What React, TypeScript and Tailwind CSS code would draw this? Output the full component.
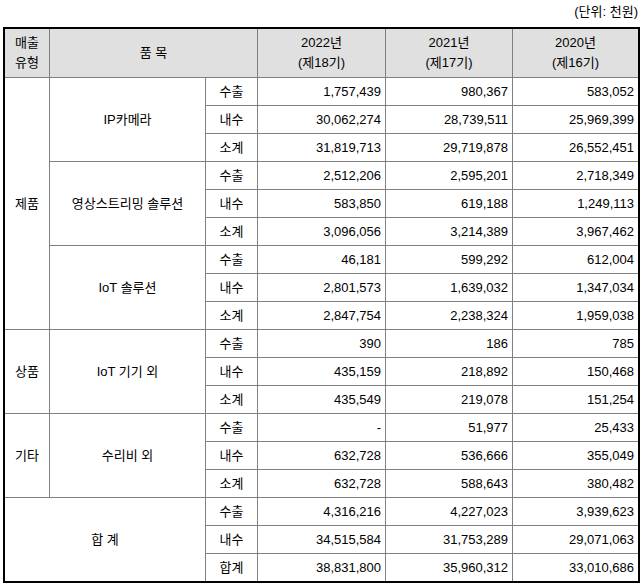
import React from "react";

type Row = { kind: string; v: [string, string, string] };
type Group = { type?: string; typeSpan?: number; name: string; rows: Row[]; total?: boolean };

const groups: Group[] = [
  {
    type: "제품",
    typeSpan: 9,
    name: "IP카메라",
    rows: [
      { kind: "수출", v: ["1,757,439", "980,367", "583,052"] },
      { kind: "내수", v: ["30,062,274", "28,739,511", "25,969,399"] },
      { kind: "소계", v: ["31,819,713", "29,719,878", "26,552,451"] },
    ],
  },
  {
    name: "영상스트리밍 솔루션",
    rows: [
      { kind: "수출", v: ["2,512,206", "2,595,201", "2,718,349"] },
      { kind: "내수", v: ["583,850", "619,188", "1,249,113"] },
      { kind: "소계", v: ["3,096,056", "3,214,389", "3,967,462"] },
    ],
  },
  {
    name: "IoT 솔루션",
    rows: [
      { kind: "수출", v: ["46,181", "599,292", "612,004"] },
      { kind: "내수", v: ["2,801,573", "1,639,032", "1,347,034"] },
      { kind: "소계", v: ["2,847,754", "2,238,324", "1,959,038"] },
    ],
  },
  {
    type: "상품",
    typeSpan: 3,
    name: "IoT 기기 외",
    rows: [
      { kind: "수출", v: ["390", "186", "785"] },
      { kind: "내수", v: ["435,159", "218,892", "150,468"] },
      { kind: "소계", v: ["435,549", "219,078", "151,254"] },
    ],
  },
  {
    type: "기타",
    typeSpan: 3,
    name: "수리비 외",
    rows: [
      { kind: "수출", v: ["-", "51,977", "25,433"] },
      { kind: "내수", v: ["632,728", "536,666", "355,049"] },
      { kind: "소계", v: ["632,728", "588,643", "380,482"] },
    ],
  },
  {
    name: "합 계",
    total: true,
    rows: [
      { kind: "수출", v: ["4,316,216", "4,227,023", "3,939,623"] },
      { kind: "내수", v: ["34,515,584", "31,753,289", "29,071,063"] },
      { kind: "합계", v: ["38,831,800", "35,960,312", "33,010,686"] },
    ],
  },
];

const cell = "bg-white flex items-center justify-center text-[13px] text-black";
const head = "bg-[#e0e0e0] flex flex-col items-center justify-center text-[13px] leading-[20px] text-black";
const num = "bg-white flex items-center justify-end pr-[4px] text-[13px] text-black";

export default function App() {
  return (
    <div
      className="w-[643px] h-[585px] bg-white"
      style={{ fontFamily: '"Liberation Sans", "Noto Sans CJK KR", sans-serif' }}
    >
      <div className="ml-[3px] w-[637px]">
        <div className="h-[27px] flex items-start justify-end pr-[2px] pt-[3px] text-[13px] leading-[18px] text-black">
          (단위: 천원)
        </div>
        <div className="border-2 border-black bg-[#808080] grid grid-cols-[44px_155px_51px_127px_126px_125px] grid-rows-[48px_repeat(18,27px)] gap-px">
          <div className={head}>
            <span>매출</span>
            <span>유형</span>
          </div>
          <div className={`${head} col-span-2`}>품 목</div>
          <div className={head}>
            <span>2022년</span>
            <span>(제18기)</span>
          </div>
          <div className={head}>
            <span>2021년</span>
            <span>(제17기)</span>
          </div>
          <div className={head}>
            <span>2020년</span>
            <span>(제16기)</span>
          </div>
          {groups.map((g, gi) => (
            <React.Fragment key={gi}>
              {g.type && (
                <div className={`${cell} ${g.typeSpan === 9 ? "row-span-9" : "row-span-3"}`}>{g.type}</div>
              )}
              <div className={`${cell} row-span-3 ${g.total ? "col-span-2" : ""}`}>{g.name}</div>
              {g.rows.map((r, ri) => (
                <React.Fragment key={ri}>
                  <div className={cell}>{r.kind}</div>
                  {r.v.map((x, xi) => (
                    <div key={xi} className={num}>
                      {x}
                    </div>
                  ))}
                </React.Fragment>
              ))}
            </React.Fragment>
          ))}
        </div>
      </div>
    </div>
  );
}
